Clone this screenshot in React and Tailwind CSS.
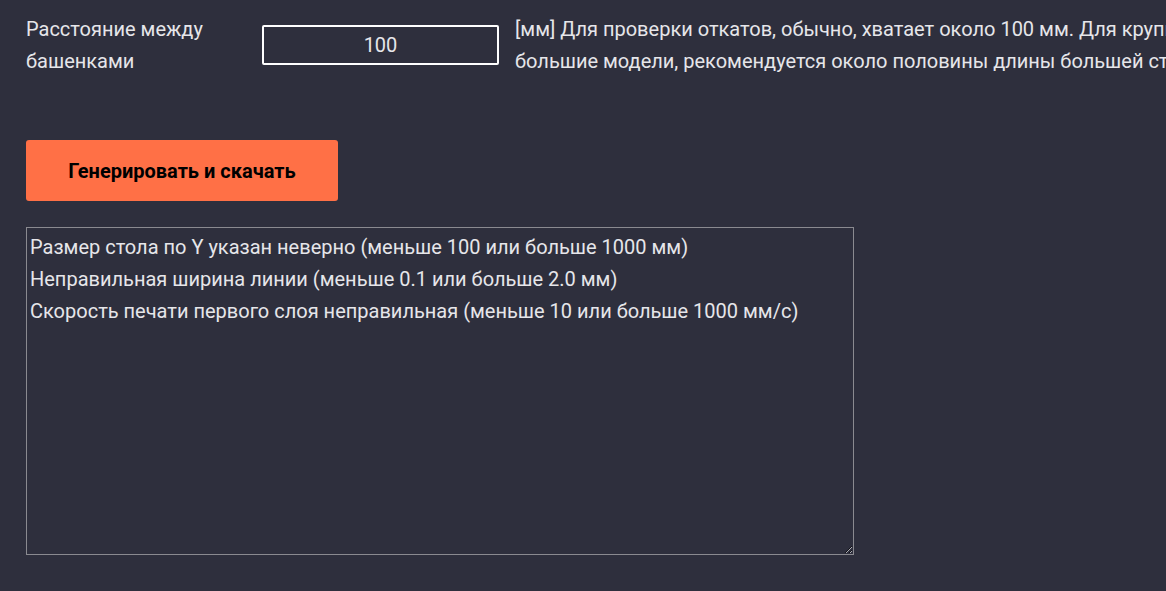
import React, { useState } from 'react';

const App = () => {
  const [distance, setDistance] = useState('100');

  const errors = [
    'Размер стола по Y указан неверно (меньше 100 или больше 1000 мм)',
    'Неправильная ширина линии (меньше 0.1 или больше 2.0 мм)',
    'Скорость печати первого слоя неправильная (меньше 10 или больше 1000 мм/с)',
  ];

  return (
    <div className="w-full h-screen overflow-hidden bg-[#2e2f3d] text-[#e6e6ea] font-['Roboto',sans-serif] text-[20px] leading-[32px]">
      <div className="pl-[26px] pt-[13px]">
        {/* Tower distance row */}
        <div className="flex items-center w-[1500px]">
          <label className="w-[236px] shrink-0">
            Расстояние между
            <br />
            башенками
          </label>
          <input
            value={distance}
            onChange={(e) => setDistance(e.target.value)}
            className="w-[237px] h-[40px] shrink-0 bg-transparent border-2 border-white rounded-[2px] text-center text-[20px] text-[#e6e6ea] outline-none"
          />
          <p className="ml-[16px] whitespace-nowrap">
            [мм] Для проверки откатов, обычно, хватает около 100 мм. Для крупных принтеров, печатающих
            <br />
            большие модели, рекомендуется около половины длины большей стороны стола.
          </p>
        </div>

        <button className="mt-[63px] w-[312px] h-[61px] bg-[#ff7046] rounded-[3px] text-black font-bold text-[20px]">
          Генерировать и скачать
        </button>

        <textarea
          readOnly
          value={errors.join('\n')}
          className="block mt-[26px] w-[828px] h-[328px] bg-transparent border border-[#8a8a90] px-[3px] py-[3px] text-[20px] leading-[32px] text-[#e6e6ea] outline-none resize"
        />
      </div>
    </div>
  );
};

export default App;
